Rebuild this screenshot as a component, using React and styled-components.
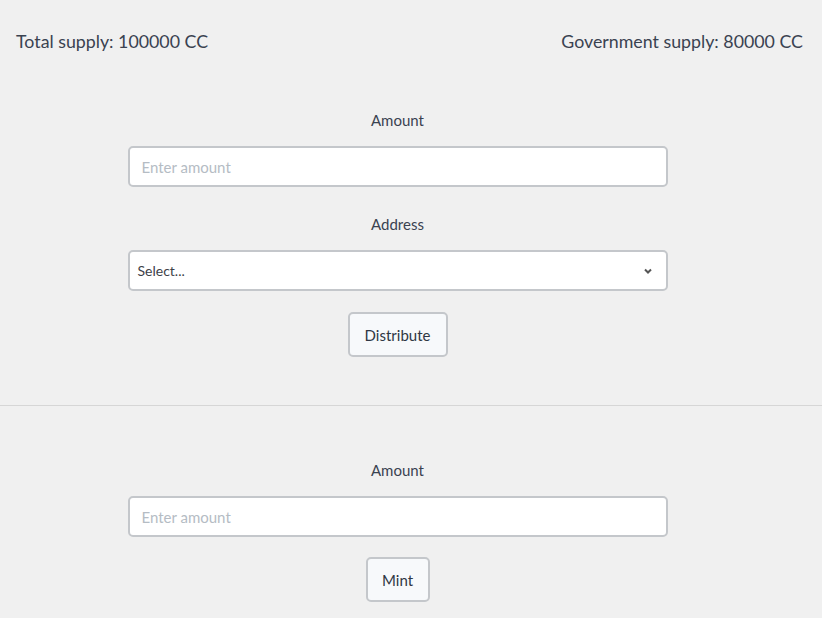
import React from "react"
import styled, {createGlobalStyle} from "styled-components"

const GlobalStyle = createGlobalStyle`
  html, body {
    margin: 0;
    padding: 0;
    background: #f0f0f0;
  }
  body {
    font-family: Lato, "Open Sans", sans-serif;
    color: #333a44;
  }
`

const Page = styled.div`
  width: 822px;
  min-height: 618px;
  background: #f0f0f0;
`

const Header = styled.div`
  display: flex;
  justify-content: space-between;
  align-items: center;
  padding: 29px 19px 31px 16px;
  height: 24px;
  font-size: 17.8px;
  line-height: 24px;
  color: #3a4250;
`

const Section = styled.div`
  width: 795px;
  display: flex;
  flex-direction: column;
  align-items: center;
  padding-top: ${p => p.top}px;
  padding-bottom: ${p => p.bottom || 0}px;
`

const Label = styled.div`
  font-size: 15px;
  line-height: 20px;
  color: #3a4250;
  margin-top: ${p => p.gap || 0}px;
  margin-bottom: 16px;
`

const Input = styled.input`
  box-sizing: border-box;
  width: 540px;
  height: 41px;
  padding: 0 12px;
  border: 2px solid #c4c7cb;
  border-radius: 5px;
  background: #fff;
  font-family: Lato, sans-serif;
  font-size: 15px;
  color: #333;
  outline: 0;

  &::placeholder {
    color: #b5bcc4;
  }
`

const SelectBox = styled.div`
  box-sizing: border-box;
  width: 540px;
  height: 41px;
  padding: 0 13px 0 8px;
  border: 2px solid #c4c7cb;
  border-radius: 5px;
  background: #fff;
  display: flex;
  align-items: center;
  justify-content: space-between;
  font-size: 14px;
  color: #3d4148;
`

const Button = styled.button`
  box-sizing: border-box;
  margin-top: ${p => p.gap}px;
  width: ${p => p.w}px;
  height: 45px;
  border: 2px solid #c4c7cb;
  border-radius: 5px;
  background: #f7f9fb;
  font-family: Lato, sans-serif;
  font-size: 15px;
  color: #2f3744;
  padding: 0;
`

const Divider = styled.hr`
  margin: 0;
  border: 0;
  border-top: 1px solid #d6d6d6;
`

const Chevron = () => (
  <svg width="10" height="8" viewBox="0 0 10 8">
    <path d="M2 2.5 L5 5.5 L8 2.5" fill="none" stroke="#555" strokeWidth="2" />
  </svg>
)

export default function App() {
  return (
    <Page>
      <GlobalStyle />
      <Header>
        <span>Total supply: 100000 CC</span>
        <span>Government supply: 80000 CC</span>
      </Header>
      <Section top={26} bottom={48}>
        <Label>Amount</Label>
        <Input placeholder="Enter amount" />
        <Label gap={27}>Address</Label>
        <SelectBox>
          <span>Select...</span>
          <Chevron />
        </SelectBox>
        <Button w={100} gap={21}>Distribute</Button>
      </Section>
      <Divider />
      <Section top={54}>
        <Label>Amount</Label>
        <Input placeholder="Enter amount" />
        <Button w={64} gap={20}>Mint</Button>
      </Section>
    </Page>
  )
}
